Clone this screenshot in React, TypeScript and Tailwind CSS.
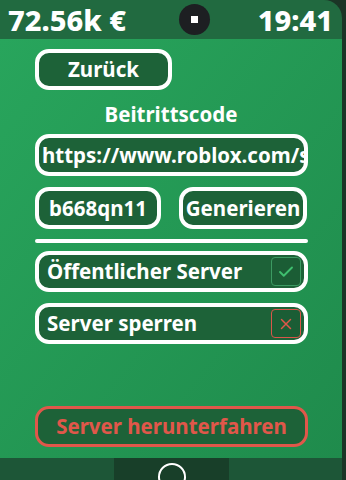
import { Check, X } from 'lucide-react';

const font = { fontFamily: '"Noto Sans", "Open Sans", sans-serif' };

function Box({ children, className = '' }: { children: React.ReactNode; className?: string }) {
  return (
    <div className={`rounded-[14px] border-[4px] border-white bg-[#1d6238] ${className}`}>
      {children}
    </div>
  );
}

const label = 'text-[20.5px] font-bold';

export default function App() {
  return (
    <div className="flex h-[480px] w-[346px] overflow-hidden bg-[#1b3526]" style={font}>
      <div className="flex w-[342px] flex-col overflow-hidden rounded-tr-[18px]">
        {/* Status bar */}
        <div className="flex h-[39px] items-center justify-between bg-[#216a40] pl-[8px] pr-[9px] text-white">
          <span className="text-[29px] font-extrabold leading-none">72.56k €</span>
          <div className="ml-[6px] flex h-[31px] w-[31px] items-center justify-center rounded-full bg-[#1d1f22]">
            <div className="h-[7px] w-[7px] bg-white" />
          </div>
          <span className="text-[29px] font-extrabold leading-none">19:41</span>
        </div>

        {/* Main panel */}
        <div className="flex flex-1 flex-col bg-gradient-to-br from-[#28a55c] to-[#1f8b4c] px-[35px] pt-[10px]">
          <Box className="flex h-[41px] w-[137px] items-center justify-center">
            <span className={`${label} text-white`}>Zurück</span>
          </Box>

          <div className={`mt-[10px] text-center leading-[28px] text-white ${label}`}>Beitrittscode</div>

          <Box className="mt-[6px] flex h-[42px] w-[273px] items-center overflow-hidden pl-[3px]">
            <span className={`whitespace-nowrap text-white ${label}`}>https://www.roblox.com/share</span>
          </Box>

          <div className="mt-[11px] flex justify-between">
            <Box className="flex h-[42px] w-[126px] items-center justify-center">
              <span className={`${label} text-white`}>b668qn11</span>
            </Box>
            <Box className="flex h-[42px] w-[128px] items-center justify-center overflow-hidden">
              <span className={`whitespace-nowrap text-white ${label}`}>Generieren</span>
            </Box>
          </div>

          <div className="mt-[10px] h-[4px] w-[273px] rounded-full bg-white" />

          <Box className="mt-[8px] flex h-[41px] w-[273px] items-center justify-between pl-[8px] pr-[3px]">
            <span className={`${label} text-white`}>Öffentlicher Server</span>
            <div className="flex h-[29px] w-[30px] items-center justify-center rounded-[4px] border border-[#3c9a62] bg-[#1b5d35]">
              <Check size={18} strokeWidth={2.5} className="text-[#3fbf6f]" />
            </div>
          </Box>

          <Box className="mt-[11px] flex h-[41px] w-[273px] items-center justify-between pl-[8px] pr-[3px]">
            <span className={`${label} text-white`}>Server sperren</span>
            <div className="flex h-[29px] w-[30px] items-center justify-center rounded-[4px] border border-[#d9564a] bg-[#1b5d35]">
              <X size={18} strokeWidth={2} className="text-[#e0574a]" />
            </div>
          </Box>

          <div className="mt-[62px] flex h-[41px] w-[273px] items-center justify-center rounded-[14px] border-[3px] border-[#e0574a] bg-[#1d6238]">
            <span className={`${label} text-[#e0574a]`}>Server herunterfahren</span>
          </div>
        </div>

        {/* Bottom bar */}
        <div className="flex h-[22px] bg-[#1d5637]">
          <div className="ml-[114px] flex h-full w-[115px] items-start justify-center overflow-hidden bg-[#183f29] pt-[5px]">
            <div className="h-[28px] w-[28px] shrink-0 rounded-full border-[2px] border-white" />
          </div>
        </div>
      </div>
    </div>
  );
}
